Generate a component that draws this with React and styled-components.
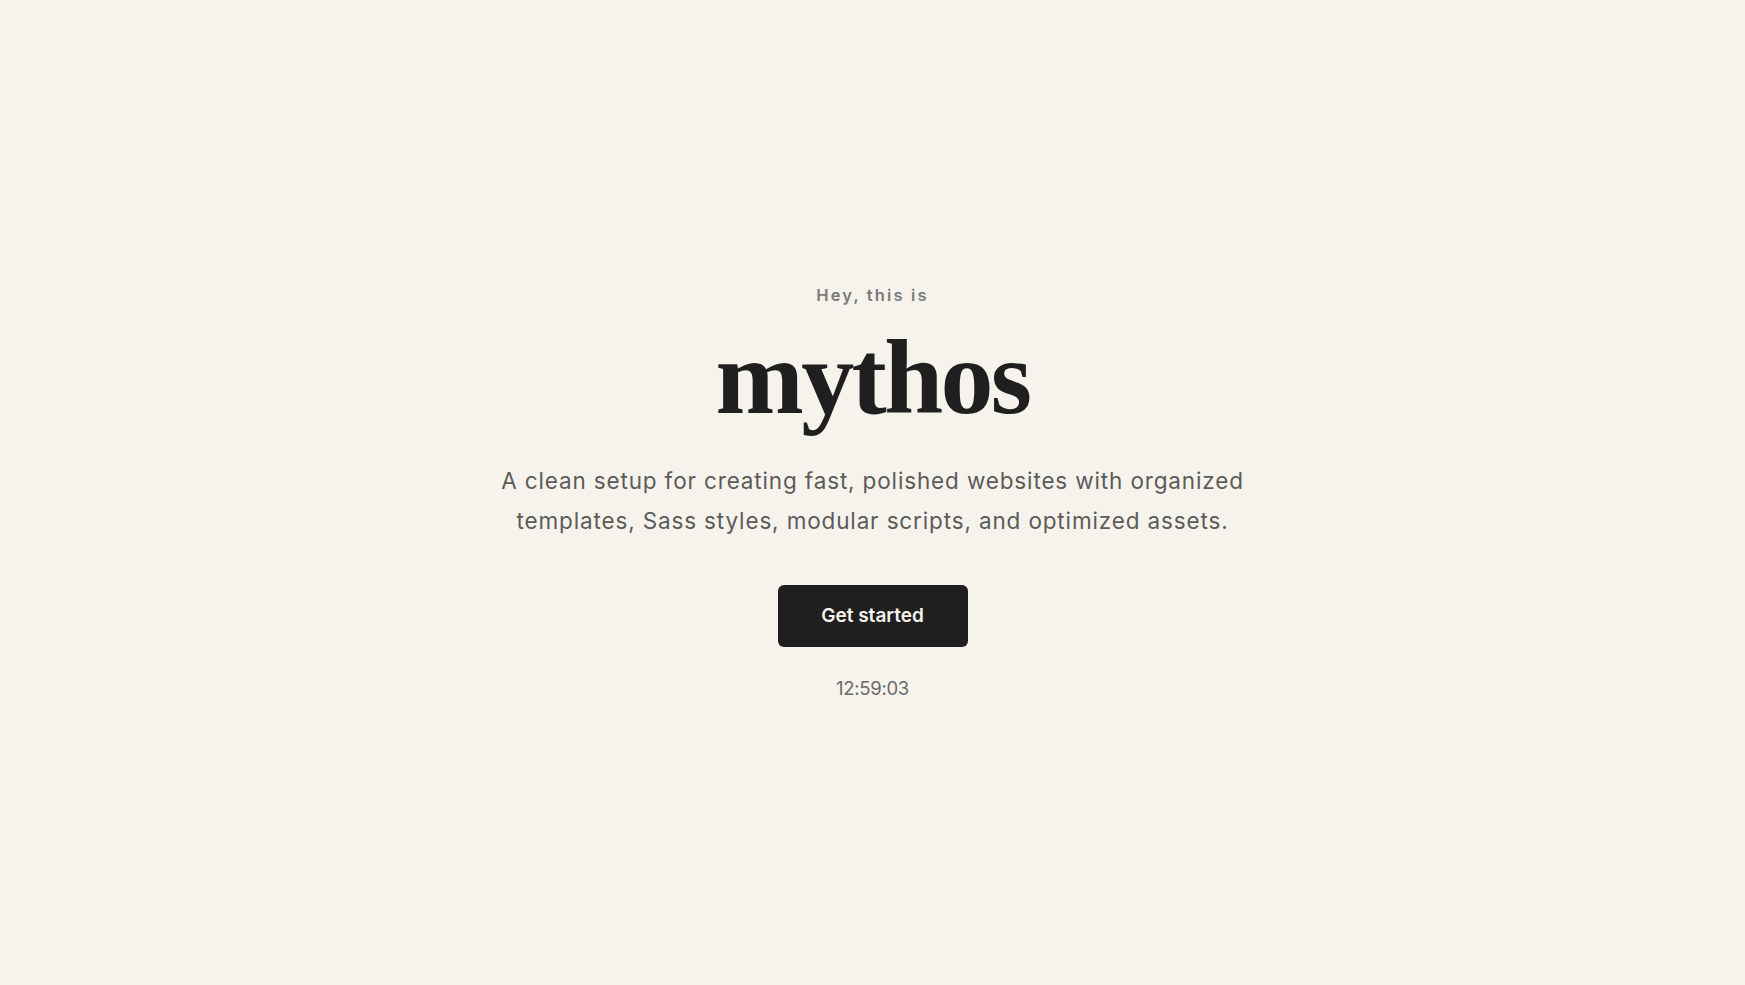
import React, { useState } from "react";
import styled, { createGlobalStyle } from "styled-components";

const GlobalStyle = createGlobalStyle`
  * { box-sizing: border-box; }
  html, body { margin: 0; padding: 0; }
  body {
    background: #f6f3ec;
    font-family: Inter, "Noto Sans", sans-serif;
    -webkit-font-smoothing: antialiased;
  }
`;

const Page = styled.main`
  min-height: 100vh;
  display: flex;
  align-items: center;
  justify-content: center;
`;

const Hero = styled.section`
  display: flex;
  flex-direction: column;
  align-items: center;
  text-align: center;
`;

const Eyebrow = styled.p`
  margin: 0;
  font-size: 16.5px;
  font-weight: 600;
  letter-spacing: 0.13em;
  color: #7a7a78;
  line-height: 1.2;
`;

const Title = styled.h1`
  margin: 14px 0 0;
  font-family: "Liberation Serif", "DejaVu Serif", serif;
  font-weight: 700;
  font-size: 106px;
  letter-spacing: -0.025em;
  line-height: 1.1;
  color: #1f1f1f;
`;

const Lead = styled.p`
  margin: 24px 0 0;
  max-width: 790px;
  font-size: 22.5px;
  letter-spacing: 0.038em;
  line-height: 40px;
  color: #5c5b58;
`;

const Button = styled.a`
  margin-top: 44px;
  display: inline-flex;
  align-items: center;
  justify-content: center;
  width: 190px;
  height: 62px;
  border-radius: 6px;
  background: #1f1f1f;
  color: #f6f3ec;
  font-size: 19px;
  font-weight: 600;
  text-decoration: none;
  cursor: pointer;
`;

const Clock = styled.p`
  margin: 30px 0 0;
  font-size: 18.5px;
  color: #6b6a67;
  letter-spacing: -0.015em;
`;

function useClock() {
  const [time] = useState("12:59:03");
  return time;
}

export default function App() {
  const time = useClock();
  return (
    <>
      <GlobalStyle />
      <Page>
        <Hero>
          <Eyebrow>Hey, this is</Eyebrow>
          <Title>mythos</Title>
          <Lead>
            A clean setup for creating fast, polished websites with organized
            templates, Sass styles, modular scripts, and optimized assets.
          </Lead>
          <Button href="#">Get started</Button>
          <Clock>{time}</Clock>
        </Hero>
      </Page>
    </>
  );
}
